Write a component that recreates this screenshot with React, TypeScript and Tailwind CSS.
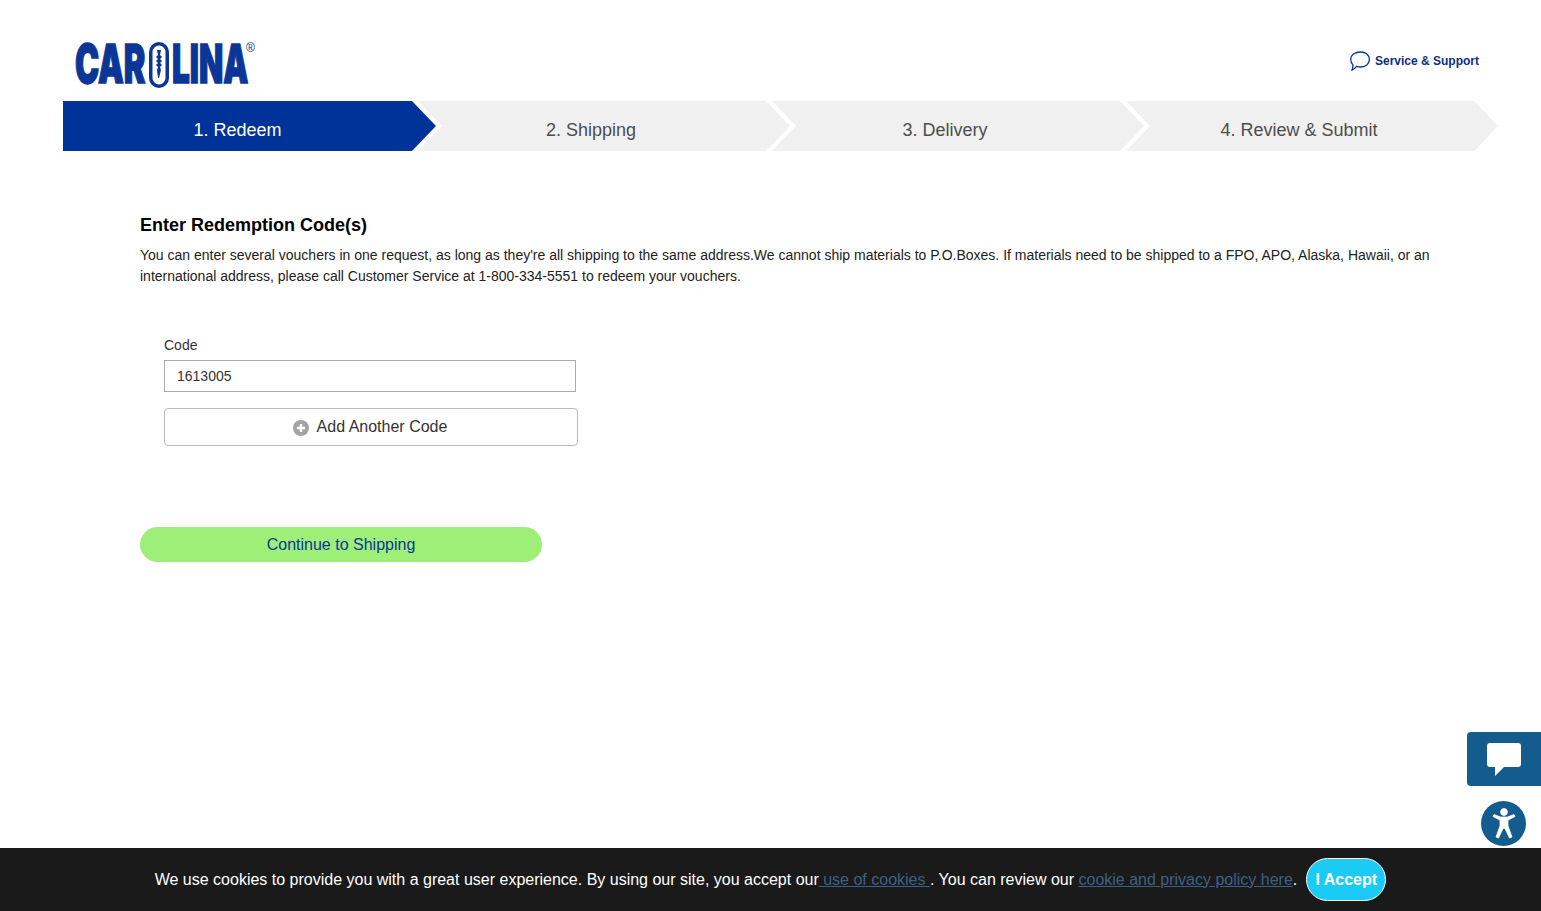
import React from "react";

const steps = ["2. Shipping", "3. Delivery", "4. Review & Submit"];

function Logo() {
  return (
    <div className="flex items-start h-[46px] w-[180px] font-['Inter',sans-serif] font-black text-[#0b3697] text-[54px] leading-[43px] [-webkit-text-stroke:1.5px_#0b3697]">
      <div className="w-[74px] h-[43px]">
        <span className="inline-block origin-top-left scale-x-[0.6] tracking-[0px] whitespace-nowrap">CAR</span>
      </div>
      <svg width="20" height="46" viewBox="0 0 20 46" className="shrink-0">
        <rect x="1.75" y="1.75" width="16.5" height="42.5" rx="8.25" fill="#fff" stroke="#0b3697" strokeWidth="3.5" />
        <path d="M8 8h4l-1 5 2 2-2 2 2 2-2 2 2 2-2 2 1 3 -2 8h-1l-1-8 1-3-2-2 2-2-2-2 2-2-2-2 2-2z" fill="#0b3697" />
      </svg>
      <div className="w-[74px] h-[43px] ml-[3px]">
        <span className="inline-block origin-top-left scale-x-[0.585] tracking-[0px] whitespace-nowrap">LINA</span>
      </div>
      <span className="text-[12px] leading-[10px] mt-[1px] font-normal font-['Liberation_Sans',sans-serif] [-webkit-text-stroke:0px_#0b3697]">®</span>
    </div>
  );
}

function App() {
  return (
    <div className="min-h-[911px] bg-white font-['Liberation_Sans',Arial,sans-serif] text-[#222]">
      <header className="flex justify-between h-[101px] pl-[75px] pr-[62px] pt-[42px]">
        <Logo />
        <div className="flex items-center gap-[5px] h-[30px] mt-[4px]">
          <svg width="20" height="20" viewBox="0 0 20 20" fill="none" stroke="#0b3697" strokeWidth="1.3">
            <path d="M10.5 1C15.5 1 19.4 4 19.4 8.6 19.4 13 15.4 16 10.5 16 9 16 7.6 15.8 6.5 15.3 5.2 17 3.6 18.6 2 19 2.6 17.6 3 15.5 2.8 13.6 1.4 12.3.7 10.6.7 8.6.7 4 5 1 10.5 1z" />
          </svg>
          <span className="text-[12px] font-bold text-[#0c2f7c]">Service &amp; Support</span>
        </div>
      </header>

      <nav className="flex pl-[63px] h-[50px] text-[18px]">
        <div className="relative z-10 w-[373px] -mr-[24px] pr-[24px] pt-[8px] h-[50px] shrink-0 flex items-center justify-center bg-[#003399] text-white [clip-path:polygon(0_0,calc(100%-24px)_0,100%_50%,calc(100%-24px)_100%,0_100%)]">
          1. Redeem
        </div>
        {steps.map((s) => (
          <div
            key={s}
            className="w-[378px] -mr-[24px] pl-[4px] pr-[24px] pt-[8px] h-[50px] shrink-0 flex items-center justify-center bg-[#f0f0f0] text-[#4d4d4d] [clip-path:polygon(6px_0,calc(100%-24px)_0,100%_50%,calc(100%-24px)_100%,6px_100%,30px_50%)]"
          >
            {s}
          </div>
        ))}
      </nav>

      <main className="pl-[140px] pr-[100px] pt-[63px]">
        <h1 className="text-[18px] leading-[22px] font-bold text-black">Enter Redemption Code(s)</h1>
        <p className="mt-[9px] text-[14px] leading-[21px] text-[#222]">
          You can enter several vouchers in one request, as long as they're all shipping to the same address.We cannot ship materials to P.O.Boxes. If materials need to be shipped to a FPO, APO, Alaska, Hawaii, or an international address, please call Customer Service at 1-800-334-5551 to redeem your vouchers.
        </p>

        <div className="ml-[24px] mt-[48px] w-[414px]">
          <label className="block text-[14px] leading-[20px] text-[#333]">Code</label>
          <input
            readOnly
            value="1613005"
            className="block mt-[5px] w-[412px] h-[32px] px-[12px] border border-[#aaaaaa] text-[14px] text-[#333] outline-none"
          />
          <button className="mt-[16px] w-[414px] h-[38px] pr-[2px] flex items-center justify-center gap-[8px] border border-[#bbbbbb] rounded-[4px] text-[16px] text-[#333]">
            <svg width="16" height="16" viewBox="0 0 16 16" className="mt-[2px]">
              <circle cx="8" cy="8" r="8" fill="#a3a3a3" />
              <path d="M8 4v8M4 8h8" stroke="#fff" strokeWidth="2.4" />
            </svg>
            Add Another Code
          </button>
        </div>

        <button className="mt-[81px] w-[402px] h-[35px] rounded-full bg-[#9def78] text-[16px] text-[#0b3697]">
          Continue to Shipping
        </button>
      </main>

      <button className="fixed right-0 top-[732px] w-[74px] h-[54px] rounded-l-[4px] bg-[#135c8d] flex items-start pl-[20px] pt-[11px]">
        <svg width="34" height="33" viewBox="0 0 34 33" fill="#fff">
          <path d="M3 0h28a3 3 0 0 1 3 3v18a3 3 0 0 1-3 3H17l-9 9v-9H3a3 3 0 0 1-3-3V3a3 3 0 0 1 3-3z" />
        </svg>
      </button>

      <button className="fixed left-[1481px] top-[801px] w-[45px] h-[45px] rounded-full bg-[#135c8d] flex items-center justify-center">
        <svg width="30" height="34" viewBox="0 0 30 34" fill="#fff" stroke="#fff" strokeWidth="0.8" strokeLinejoin="round">
          <circle cx="15" cy="5" r="3.4" />
          <path d="M4 9.5L5 7.5 11.5 10H18.5L25 7.5 26 9.5 19 13V19L23 30 20.5 31 16 21.5H14L9.5 31 7 30 11 19V13Z" />
        </svg>
      </button>

      <div className="fixed left-0 right-0 bottom-0 h-[63px] bg-[#1a1a1a] flex items-center justify-center text-[16px] text-white">
        <span>
          We use cookies to provide you with a great user experience. By using our site, you accept our<a className="underline text-[#3a6186]"> use of cookies </a>. You can review our <a className="underline text-[#3a6186]">cookie and privacy policy here</a>.
        </span>
        <button className="ml-[9px] w-[80px] h-[43px] rounded-[22px] bg-[#1ccbf5] border border-white text-white font-bold text-[16px]">
          I Accept
        </button>
      </div>
    </div>
  );
}

export default App;
